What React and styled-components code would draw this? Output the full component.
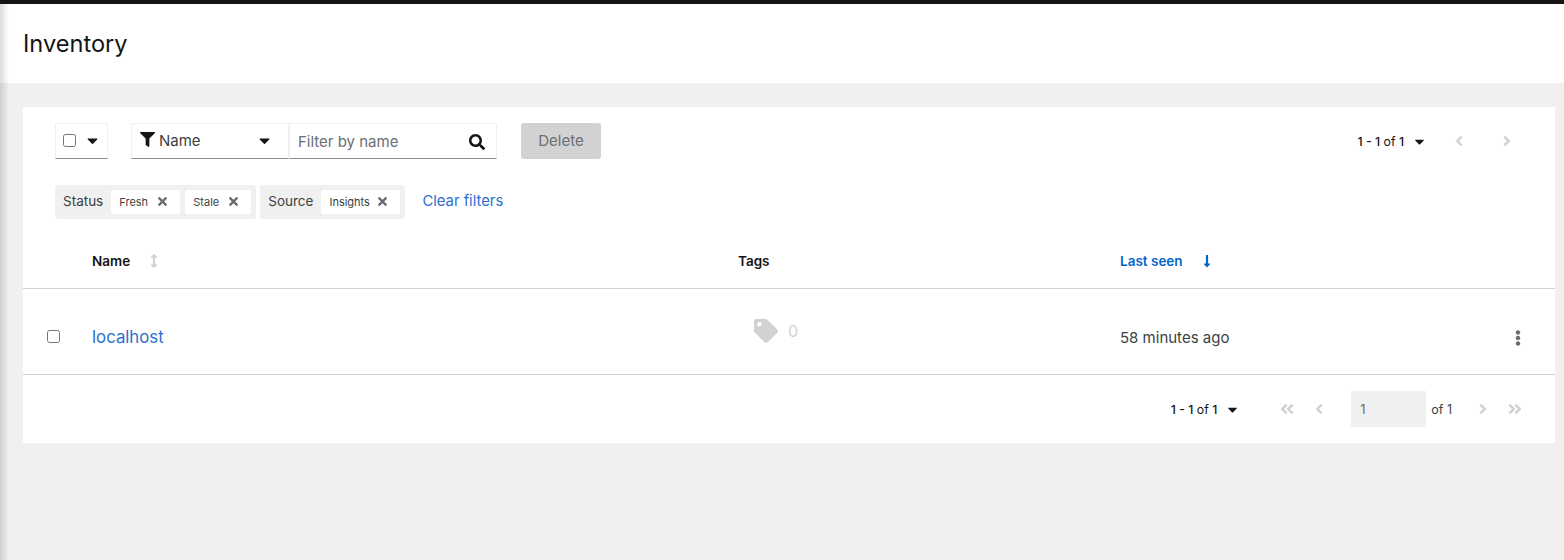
import React from 'react'
import styled, {createGlobalStyle} from 'styled-components'
import {
  FaFilter, FaSearch, FaTimes, FaCaretDown, FaAngleLeft, FaAngleRight,
  FaAngleDoubleLeft, FaAngleDoubleRight, FaTag, FaEllipsisV,
  FaLongArrowAltDown, FaArrowsAltV,
} from 'react-icons/fa'

const Global = createGlobalStyle`
  html, body { margin: 0; padding: 0; background: #f0f0f0; }
  body { font-family: Inter, "Noto Sans", "Liberation Sans", sans-serif; color: #151515; }
`

const Page = styled.div`
  position: relative;
  width: 1564px;
  height: 560px;
  overflow: hidden;
  display: flex;
  flex-direction: column;
  border-top: 4px solid #151515;
  box-sizing: border-box;
  &::before {
    content: '';
    position: absolute;
    left: 0;
    top: 0;
    bottom: 0;
    width: 9px;
    background: linear-gradient(to right, rgba(0,0,0,.14), rgba(0,0,0,0));
  }
`

const PageHeader = styled.header`
  height: 79px;
  background: #fff;
  display: flex;
  align-items: center;
  padding-left: 23px;
  flex: none;
`

const Title = styled.h1`
  margin: 0 0 1px;
  font-size: 23.6px;
  font-weight: 400;
  color: #151515;
`

const Main = styled.main`
  padding: 24px 9px 0 23px;
`

const Card = styled.section`
  background: #fff;
  height: 336px;
  display: flex;
  flex-direction: column;
`

const Toolbar = styled.div`
  display: flex;
  align-items: flex-start;
  padding: 16px 0 0 32px;
  height: 36px;
`

const ToolbarGap = styled.div`
  width: 23px;
  flex: none;
`

const Underlined = styled.div`
  box-sizing: border-box;
  height: 36px;
  display: flex;
  align-items: center;
  border: 1px solid #f0f0f0;
  border-bottom-color: #8a8d90;
  width: ${p => p.$w}px;
  padding: 0 ${p => p.$pr || 0}px 0 ${p => p.$pl || 0}px;
`

const CheckBox = styled.span`
  box-sizing: border-box;
  display: inline-block;
  width: 13px;
  height: 13px;
  border: 1px solid #767676;
  border-radius: 2.5px;
  background: #fff;
  flex: none;
`

const BulkCheck = styled(CheckBox)`
  margin-bottom: 2px;
  margin-right: 8px;
`

const SelectLabel = styled.span`
  font-size: 15px;
  color: #3c3f42;
  margin: 0 0 2px 4px;
  flex: 1;
`

const Caret = styled(FaCaretDown)`
  font-size: 17px;
  color: #151515;
  flex: none;
  margin-bottom: 2px;
`

const NameFilterIcon = styled(FaFilter)`
  font-size: 15px;
  color: #151515;
  margin-bottom: 3px;
`

const SearchIcon = styled(FaSearch)`
  font-size: 16px;
  color: #151515;
  margin-top: 2px;
`

const Placeholder = styled.span`
  font-size: 15px;
  color: #6a6e73;
  flex: 1;
`

const DeleteButton = styled.button`
  margin-left: 24px;
  width: 80px;
  height: 36px;
  border: 0;
  border-radius: 3px;
  background: #d2d2d2;
  color: #6a6e73;
  font: inherit;
  font-size: 15px;
  padding: 0 0 2px;
`

const Pager = styled.div`
  margin-left: auto;
  display: flex;
  align-items: center;
  height: 36px;
  padding-right: 40px;
`

const PagerText = styled.span`
  font-size: 12.3px;
  color: #151515;
  white-space: nowrap;
  b { font-weight: 500; }
`

const PagerCaret = styled(FaCaretDown)`
  font-size: 15px;
  margin-left: 8px;
  color: #151515;
`

const NavIcon = styled.span`
  display: inline-flex;
  justify-content: center;
  color: #d2d2d2;
  font-size: 16px;
  width: 16px;
  margin-left: ${p => p.$ml}px;
`

const Chips = styled.div`
  display: flex;
  align-items: center;
  margin: 26px 0 0 32px;
  height: 34px;
`

const ChipGroup = styled.div`
  box-sizing: border-box;
  height: 34px;
  background: #f0f0f0;
  border-radius: 3px;
  display: flex;
  align-items: center;
  padding: 0 5px 0 8px;
  margin-right: 4px;
`

const GroupLabel = styled.span`
  font-size: 13.5px;
  color: #3c3f42;
  margin: 0 8px 2px 0;
`

const Chip = styled.span`
  box-sizing: border-box;
  height: 24px;
  width: ${p => p.$w}px;
  background: #fff;
  border-radius: 2px;
  display: flex;
  align-items: center;
  justify-content: space-between;
  padding: 0 11px 0 8px;
  font-size: 11px;
  color: #3c3f42;
  margin-right: ${p => p.$mr || 0}px;
  svg { font-size: 13px; color: #6a6e73; margin-bottom: 2px; }
`

const ClearLink = styled.a`
  margin: 0 0 3px 13px;
  font-size: 14.8px;
  color: #2b6fd0;
`

const TableRow = styled.div`
  display: grid;
  grid-template-columns: 69px 646px 382px 1fr;
  border-bottom: 1px solid #d2d2d2;
  height: ${p => p.$h}px;
  padding-top: ${p => p.$pt}px;
  box-sizing: border-box;
  align-items: center;
`

const HeadCell = styled.div`
  display: flex;
  align-items: center;
  font-size: 13.5px;
  font-weight: 600;
  color: ${p => p.$active ? '#06c' : '#151515'};
  grid-column: ${p => p.$col};
  svg { font-size: 14px; margin-left: ${p => p.$gap}px; color: ${p => p.$active ? '#06c' : '#d2d2d2'}; }
`

const CheckCell = styled.div`
  display: flex;
  padding-left: 24px;
`

const HostLink = styled.a`
  font-size: 16.8px;
  color: #2b6fd0;
`

const TagCell = styled.div`
  display: flex;
  align-items: center;
  padding: 0 0 11px 16px;
  color: #d2d2d2;
  font-size: 16px;
  svg { font-size: 24px; margin-right: 10px; }
`

const SeenCell = styled.div`
  display: flex;
  justify-content: space-between;
  align-items: center;
  padding-top: 2px;
  font-size: 15px;
  color: #3c3f42;
  svg { font-size: 16px; color: #6a6e73; margin-right: 29px; }
`

const Footer = styled.div`
  display: flex;
  align-items: center;
  justify-content: flex-end;
  height: 68px;
  padding-right: 32px;
`

const PageInput = styled.div`
  box-sizing: border-box;
  width: 75px;
  height: 36px;
  background: #f0f0f0;
  margin-left: 24px;
  display: flex;
  align-items: center;
  padding-left: 9px;
  font-size: 13px;
  color: #6a6e73;
`

const OfTotal = styled.span`
  font-size: 12.5px;
  color: #3c3f42;
  margin-left: 5px;
`

const App = () => (
  <Page>
    <Global />
    <PageHeader>
      <Title>Inventory</Title>
    </PageHeader>
    <Main>
      <Card>
        <Toolbar>
          <Underlined $w={53} $pl={7}>
            <BulkCheck />
            <Caret />
          </Underlined>
          <ToolbarGap />
          <Underlined $w={158} $pl={8} $pr={15}>
            <NameFilterIcon />
            <SelectLabel>Name</SelectLabel>
            <Caret />
          </Underlined>
          <Underlined $w={208} $pl={8} $pr={11}>
            <Placeholder>Filter by name</Placeholder>
            <SearchIcon />
          </Underlined>
          <DeleteButton>Delete</DeleteButton>
          <Pager>
            <PagerText><b>1 - 1</b> of <b>1</b></PagerText>
            <PagerCaret />
            <NavIcon $ml={24}><FaAngleLeft /></NavIcon>
            <NavIcon $ml={32}><FaAngleRight /></NavIcon>
          </Pager>
        </Toolbar>
        <Chips>
          <ChipGroup>
            <GroupLabel>Status</GroupLabel>
            <Chip $w={69} $mr={5}>Fresh <FaTimes /></Chip>
            <Chip $w={66}>Stale <FaTimes /></Chip>
          </ChipGroup>
          <ChipGroup>
            <GroupLabel>Source</GroupLabel>
            <Chip $w={79}>Insights <FaTimes /></Chip>
          </ChipGroup>
          <ClearLink>Clear filters</ClearLink>
        </Chips>
        <TableRow $h={70} $pt={14}>
          <HeadCell $col={2} $gap={17}>Name <FaArrowsAltV /></HeadCell>
          <HeadCell $col={3}>Tags</HeadCell>
          <HeadCell $col={4} $active $gap={17}>Last seen <FaLongArrowAltDown /></HeadCell>
        </TableRow>
        <TableRow $h={86} $pt={10}>
          <CheckCell><CheckBox /></CheckCell>
          <HostLink>localhost</HostLink>
          <TagCell><FaTag />0</TagCell>
          <SeenCell>58 minutes ago <FaEllipsisV /></SeenCell>
        </TableRow>
        <Footer>
          <PagerText><b>1 - 1</b> of <b>1</b></PagerText>
          <PagerCaret />
          <NavIcon $ml={39}><FaAngleDoubleLeft /></NavIcon>
          <NavIcon $ml={16}><FaAngleLeft /></NavIcon>
          <PageInput>1</PageInput>
          <OfTotal>of 1</OfTotal>
          <NavIcon $ml={23}><FaAngleRight /></NavIcon>
          <NavIcon $ml={16}><FaAngleDoubleRight /></NavIcon>
        </Footer>
      </Card>
    </Main>
  </Page>
)

export default App
